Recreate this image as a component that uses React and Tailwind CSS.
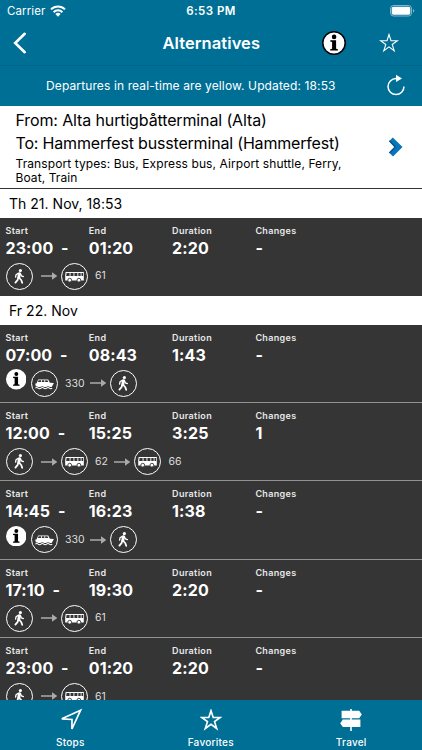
const TRIPS_THURSDAY = [
  { start: '23:00', end: '01:20', duration: '2:20', changes: '-', legs: [{ type: 'walk' }, { type: 'bus', line: '61' }] },
];

const TRIPS_FRIDAY = [
  { start: '07:00', end: '08:43', duration: '1:43', changes: '-', info: true, legs: [{ type: 'boat', line: '330' }, { type: 'walk' }] },
  { start: '12:00', end: '15:25', duration: '3:25', changes: '1', legs: [{ type: 'walk' }, { type: 'bus', line: '62' }, { type: 'bus', line: '66' }] },
  { start: '14:45', end: '16:23', duration: '1:38', changes: '-', info: true, legs: [{ type: 'boat', line: '330' }, { type: 'walk' }] },
  { start: '17:10', end: '19:30', duration: '2:20', changes: '-', legs: [{ type: 'walk' }, { type: 'bus', line: '61' }] },
  { start: '23:00', end: '01:20', duration: '2:20', changes: '-', legs: [{ type: 'walk' }, { type: 'bus', line: '61' }] },
];

function WalkIcon() {
  return (
    <svg width="27" height="27" viewBox="0 0 27 27" className="shrink-0" fill="none" stroke="white" strokeLinecap="round" strokeLinejoin="round">
      <circle cx="14.4" cy="7.6" r="1.6" fill="white" stroke="none" />
      <path d="M13.4 10.8L12.8 14.4" strokeWidth="3" />
      <path d="M12.2 10.4L10 11.8L9.6 14.2M14.4 10.6L15.4 12.8L17.4 13.6" strokeWidth="1.3" />
      <path d="M12.2 15L11.5 17.2L9.4 19.6M13.3 15L15.2 17L16.2 19.8" strokeWidth="1.8" />
    </svg>
  );
}

function BusIcon() {
  return (
    <svg width="27" height="27" viewBox="0 0 27 27" className="shrink-0">
      <path d="M4.6 9h18.2v8.4H4.2v-5.2z" fill="white" />
      <path d="M5.6 10h3v3H5.2zM9.5 10h3v3h-3zM13.4 10h3v3h-3zM17.3 10h2.4v3h-2.4zM20.5 10h1.6v3h-1.6z" fill="#353535" />
      <circle cx="8.7" cy="17.2" r="1.9" fill="white" stroke="#353535" strokeWidth="0.9" />
      <circle cx="17.9" cy="17.2" r="1.9" fill="white" stroke="#353535" strokeWidth="0.9" />
    </svg>
  );
}

function BoatIcon() {
  return (
    <svg width="27" height="27" viewBox="0 0 27 27" className="shrink-0">
      <path d="M5.6 13.2l1.6-3.8h10l1.7 3.3 4 .2-2.2 4.2H5l-.8-3.4z" fill="white" />
      <path d="M7.6 10.3h2.6v1.8H6.9zM11 10.3h2.4v1.8H11zM14.2 10.3h2.2l.9 1.8h-3.1z" fill="#353535" />
      <path d="M4 17.2q1.45-1.3 2.9 0t2.9 0 2.9 0 2.9 0 2.9 0 2.9 0" fill="none" stroke="#353535" strokeWidth="0.8" />
      <path d="M4.4 18.1q1.4-1.2 2.8 0t2.8 0 2.8 0 2.8 0 2.8 0 2.8 0" fill="none" stroke="white" strokeWidth="1.1" />
    </svg>
  );
}

const LEG_ICONS = { walk: WalkIcon, bus: BusIcon, boat: BoatIcon };

function InfoGlyph({ size, outlined }) {
  return (
    <svg width={size} height={size} viewBox="0 0 24 24" className="shrink-0">
      <circle cx="12" cy="12" r={outlined ? 11.2 : 12} fill="white" stroke={outlined ? 'black' : 'none'} strokeWidth="1.5" />
      <circle cx="12.1" cy="5.9" r="2.3" fill="black" />
      <path d="M8.3 9.2h5.8v8.6l1.8.5v1.2H8.2v-1.2l1.9-.5v-6.9l-1.8-.4z" fill="black" />
    </svg>
  );
}

function Arrow() {
  return (
    <svg width="16" height="10" viewBox="0 0 16 10" className="ml-auto mr-1 shrink-0">
      <path d="M0 4.3h11V1.2L16.2 5 11 8.8V5.7H0z" fill="#aaaaaa" />
    </svg>
  );
}

function Leg({ leg, previous }) {
  const Icon = LEG_ICONS[leg.type];
  return (
    <div className="flex items-center">
      {previous && (
        <span className={previous.line === '330' ? 'pl-[5.5px]' : previous.line ? 'pl-[6.5px]' : 'pl-[8.5px]'}>
          <Arrow />
        </span>
      )}
      <span className="w-[27px] h-[27px] shrink-0 rounded-full border-[1.2px] border-white flex items-center justify-center">
        <Icon />
      </span>
      {leg.line && <span className="ml-[7px] pt-[1px] text-[10.5px] leading-none text-[#dddddd]">{leg.line}</span>}
    </div>
  );
}

function Column({ label, value }) {
  return (
    <div>
      <div className="text-[9px] leading-[11px] font-semibold tracking-[0.34px] text-[#e8e8e8]">{label}</div>
      <div className="mt-[2px] text-[16px] leading-[20px] font-bold tracking-[0.1px] whitespace-pre">{value}</div>
    </div>
  );
}

function Trip({ trip, last }) {
  return (
    <div className={`h-[78.25px] shrink-0 pt-[7px] pl-[5.5px] bg-[#353535] text-white ${last ? '' : 'border-b border-[#929292]'}`}>
      <div className="grid grid-cols-[83.3px_83.3px_83.3px_1fr]">
        <Column label="Start" value={`${trip.start}  -`} />
        <Column label="End" value={trip.end} />
        <Column label="Duration" value={trip.duration} />
        <Column label="Changes" value={trip.changes} />
      </div>
      <div className="mt-[5px] h-[27px] flex items-center">
        {trip.info && (
          <span className="mr-[5px] -mt-[8px]">
            <InfoGlyph size={20.5} />
          </span>
        )}
        {trip.legs.map((leg, i) => (
          <Leg key={i} leg={leg} previous={trip.legs[i - 1]} />
        ))}
      </div>
    </div>
  );
}

function DayHeader({ children }) {
  return (
    <div className="h-[29px] shrink-0 pl-[9px] bg-white text-black text-[14px] leading-[29px] tracking-[0.02px]">{children}</div>
  );
}

function Star({ size, width }) {
  return (
    <svg width={size} height={size} viewBox="0 0 20 20" fill="none" stroke="white" strokeWidth={width}>
      <path d="M10 1.5l2 6.2h6.4l-5.2 3.8 2 6.2-5.2-3.8-5.2 3.8 2-6.2-5.2-3.8H8z" />
    </svg>
  );
}

function Tab({ label, children }) {
  return (
    <div className="w-[140.5px] flex flex-col items-center pt-[7px]">
      <div className="h-[25px] flex items-center">{children}</div>
      <span className="mt-[4px] text-[10px] leading-[12px] font-medium tracking-[0.25px]">{label}</span>
    </div>
  );
}

export default function App() {
  return (
    <div className="w-[422px] h-[750px] overflow-hidden flex flex-col bg-[#353535] font-['Inter','Liberation_Sans',sans-serif]">
      {/* Status bar and title */}
      <header className="h-[65.5px] shrink-0 bg-[#006f96] text-white border-b border-[#00658b]">
        <div className="h-[22px] grid grid-cols-3 items-center pl-[7px] pr-[7px]">
          <div className="flex items-center gap-[5px]">
            <span className="text-[11.5px] leading-[22px] tracking-[0.1px]">Carrier</span>
            <svg width="16" height="12" viewBox="0 0 16 12" fill="none" stroke="white" strokeWidth="2">
              <path d="M1 4.4a10 10 0 0 1 14 0M3.6 7.2a6.2 6.2 0 0 1 8.8 0" />
              <path d="M8 11.7L5.4 9a3.7 3.7 0 0 1 5.2 0z" fill="white" stroke="none" />
            </svg>
          </div>
          <span className="text-center text-[11.5px] leading-[22px] font-semibold tracking-[0.45px]">6:53 PM</span>
          <svg width="25" height="12" viewBox="0 0 25 12" className="ml-auto">
            <rect x="0.5" y="0.5" width="21" height="10.5" rx="3" fill="none" stroke="white" strokeOpacity="0.5" />
            <rect x="1.7" y="1.7" width="18.6" height="8.1" rx="1.8" fill="white" />
            <path d="M23 4v3.6q1.3-.5 1.3-1.8T23 4z" fill="white" fillOpacity="0.5" />
          </svg>
        </div>
        <div className="h-[42px] flex items-center">
          <svg width="14" height="22" viewBox="0 0 14 22" className="ml-[13px]" fill="none" stroke="white" strokeWidth="2.6" strokeLinecap="round">
            <path d="M11.7 1.8L2.2 11l9.5 9.2" />
          </svg>
          <h1 className="ml-[135.5px] w-[98px] text-[16.5px] leading-[20px] font-semibold tracking-[0.08px] whitespace-nowrap">Alternatives</h1>
          <span className="ml-[61.5px]">
            <InfoGlyph size={24} outlined />
          </span>
          <span className="ml-[32.5px]">
            <Star size={20} width={1.1} />
          </span>
        </div>
      </header>

      {/* Real-time notice */}
      <div className="h-[40.5px] shrink-0 bg-[#006f96] text-white flex items-center pl-[46px] pr-[16px]">
        <span className="pt-[1px] text-[12px] leading-[16px] tracking-[0.12px] whitespace-nowrap">Departures in real-time are yellow. Updated: 18:53</span>
        <svg width="20" height="22" viewBox="0 0 20 22" className="ml-auto mb-[2px]" fill="none" stroke="white" strokeWidth="1.5">
          <path d="M11.5 4.6H10a8 8 0 1 0 8 8" />
          <path d="M10 .8l6 3.7-6 3.6z" fill="white" stroke="none" />
        </svg>
      </div>

      {/* Search summary */}
      <div className="h-[82.5px] shrink-0 bg-white text-black flex items-center pl-[15.5px] pr-[19px] border-b border-[#333333]">
        <div className="flex-1 self-start pt-[3px] whitespace-nowrap">
          <p className="text-[16px] leading-[23px] tracking-[-0.13px]">From: Alta hurtigbåtterminal (Alta)</p>
          <p className="text-[16px] leading-[23px] tracking-[-0.18px]">To: Hammerfest bussterminal (Hammerfest)</p>
          <p className="mt-[2px] text-[12px] leading-[14px] tracking-[0.09px]">
            Transport types: Bus, Express bus, Airport shuttle, Ferry,
            <br />
            Boat, Train
          </p>
        </div>
        <svg width="14" height="20" viewBox="0 0 14 20">
          <path d="M0 4.2L3.8 0.5 13.5 10 4 19.5 0 15.5 5.4 10z" fill="#0874b9" />
          <path d="M0 4.2L5.4 10 0 15.5l1 1L7 10 1 3.2z" fill="#125082" />
        </svg>
      </div>

      {/* Departures */}
      <main className="flex-1 min-h-0 overflow-hidden flex flex-col">
        <DayHeader>Th 21. Nov, 18:53</DayHeader>
        {TRIPS_THURSDAY.map((trip) => (
          <Trip key={trip.start} trip={trip} last />
        ))}
        <DayHeader>Fr 22. Nov</DayHeader>
        {TRIPS_FRIDAY.map((trip) => (
          <Trip key={trip.start} trip={trip} />
        ))}
      </main>

      <nav className="h-[50px] shrink-0 bg-[#006f96] text-white flex">
        <Tab label="Stops">
          <svg width="24" height="24" viewBox="0 0 24 24" fill="none" stroke="white" strokeWidth="1.7" className="ml-[2px]">
            <path d="M21.6 2.2L2.8 10.8l10.2.7-.1 9.5z" />
          </svg>
        </Tab>
        <Tab label="Favorites">
          <Star size={22} width={1.5} />
        </Tab>
        <Tab label="Travel">
          <svg width="24" height="24" viewBox="0 0 24 24" fill="white">
            <path d="M11.2 1h1.6v22h-1.6z" />
            <path d="M2.6 2.8h17.6l2.6 3.8-2.6 3.7H2.6zM21.4 11.6H3.8l-2.6 3.7L3.8 19h17.6z" />
          </svg>
        </Tab>
      </nav>
    </div>
  );
}
